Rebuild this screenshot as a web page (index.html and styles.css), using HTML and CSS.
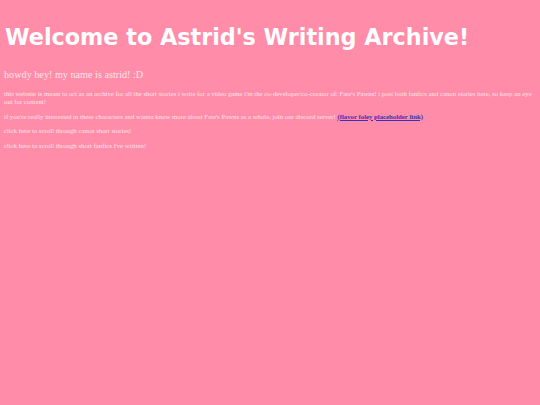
FILE: index.html
```html
<!DOCTYPE html>
<html>
<head>
<meta charset="utf-8">
<title>Astrid's Writing Archive</title>
<link rel="stylesheet" href="styles.css">
</head>
<body>
<h1 class="title">Welcome to Astrid's Writing Archive!</h1>
<p class="intro">howdy hey! my name is astrid! :D</p>
<p class="text">this website is meant to act as an archive for all the short stories i write for a video game i'm the co-developer/co-creator of: Fate's Pawns! i post both fanfics and canon stories here, so keep an eye out for content!</p>
<p class="text">if you're really interested in these characters and wanna know more about Fate's Pawns as a whole, join our discord server! <a class="link" href="#">(flavor foley placeholder link)</a></p>
<p class="text">click here to scroll through canon short stories!</p>
<p class="text">click here to scroll through short fanfics i've written!</p>
</body>
</html>
```
FILE: styles.css
```css
html, body {
  background: #ff8ca8;
}
body {
  margin: 0;
  padding: 4px;
  font-family: "Liberation Serif", serif;
  color: #ffe4ec;
}
.title {
  font-family: "DejaVu Sans", sans-serif;
  font-weight: bold;
  font-size: 22.3px;
  line-height: 28px;
  color: #ffffff;
  margin: 19px 0 18px 1px;
}
.intro {
  font-size: 10.2px;
  line-height: 12px;
  margin: 0 0 9px 0;
}
.text {
  font-size: 6.75px;
  line-height: 8px;
  margin: 0 0 6.5px 0;
}
.link {
  color: #3f2fb8;
  font-weight: bold;
}
```
